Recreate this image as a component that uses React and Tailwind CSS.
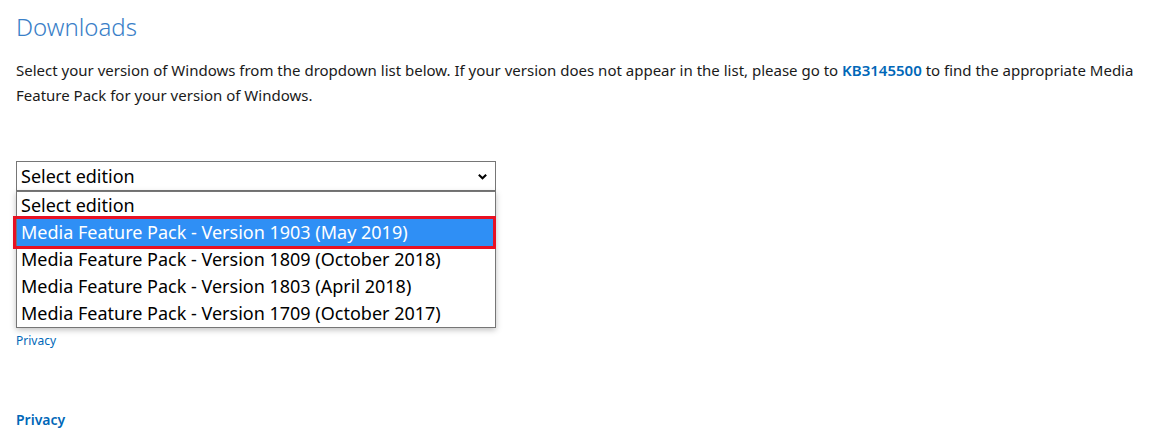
const options = [
  "Select edition",
  "Media Feature Pack - Version 1903 (May 2019)",
  "Media Feature Pack - Version 1809 (October 2018)",
  "Media Feature Pack - Version 1803 (April 2018)",
  "Media Feature Pack - Version 1709 (October 2017)",
];

export default function App() {
  return (
    <div
      className="w-[1155px] h-[443px] bg-white px-4 overflow-hidden text-[#1a1a1a]"
      style={{ fontFamily: '"Noto Sans", "Open Sans", sans-serif' }}
    >
      <h1 className="pt-[9px] text-[24px] leading-[36px] font-light text-[#3a80c8]">
        Downloads
      </h1>
      <p className="mt-[13px] text-[15px] leading-[25px] -mr-1">
        Select your version of Windows from the dropdown list below. If your
        version does not appear in the list, please go to{" "}
        <a className="font-semibold text-[#0067b8]">KB3145500</a> to find the
        appropriate Media Feature Pack for your version of Windows.
      </p>

      {/* Select + open list */}
      <div className="relative mt-[53px] w-[480px]">
        <div className="h-[30px] border border-[#767676] flex items-center justify-between pl-[4px] pr-[7px] text-[18px] text-black">
          <span>Select edition</span>
          <svg
            className="w-[11px] h-[11px]"
            viewBox="0 0 12 12"
            fill="none"
            stroke="currentColor"
            strokeWidth={2.2}
          >
            <path d="M2 4l4 4 4-4" />
          </svg>
        </div>
        <ul className="absolute left-0 top-[30px] w-[480px] bg-white border border-[#767676] shadow-[0_2px_6px_rgba(0,0,0,0.25)] z-10 text-[18px] text-black">
          {options.map((o, i) =>
            i === 1 ? (
              <li
                key={o}
                className="relative h-[27px] flex items-center pl-[4px] bg-[#2f8ff5] text-white"
              >
                {o}
                <div className="absolute -left-[4px] -right-[1px] -top-[3px] -bottom-[3px] border-[3px] border-[#e81123]" />
              </li>
            ) : (
              <li key={o} className="h-[27px] flex items-center pl-[4px]">
                {o}
              </li>
            )
          )}
        </ul>
      </div>

      <a className="block mt-[141px] text-[12px] text-[#0067b8]">Privacy</a>
      <a className="block mt-[59px] text-[14px] font-semibold text-[#0067b8]">
        Privacy
      </a>
    </div>
  );
}
